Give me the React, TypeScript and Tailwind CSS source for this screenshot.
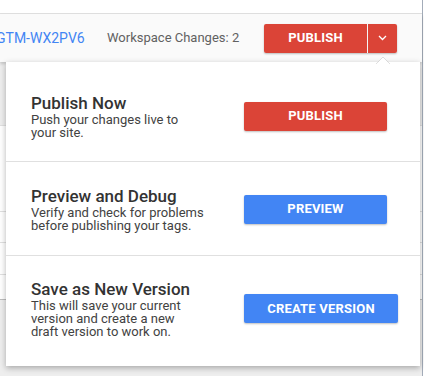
import React from 'react';

type Section = {
  title: string;
  lines: string[];
  action: string;
  color: 'red' | 'blue';
  width: string;
  pad: string;
};

const sections: Section[] = [
  {
    title: 'Publish Now',
    lines: ['Push your changes live to', 'your site.'],
    action: 'PUBLISH',
    color: 'red',
    width: 'w-[143px]',
    pad: 'pt-[31px] pb-[22px] border-b border-[#e0e0e0]',
  },
  {
    title: 'Preview and Debug',
    lines: ['Verify and check for problems', 'before publishing your tags.'],
    action: 'PREVIEW',
    color: 'blue',
    width: 'w-[143px]',
    pad: 'pt-[24px] pb-[23px] border-b border-[#e0e0e0]',
  },
  {
    title: 'Save as New Version',
    lines: ['This will save your current', 'version and create a new', 'draft version to work on.'],
    action: 'CREATE VERSION',
    color: 'blue',
    width: 'w-[154px]',
    pad: 'pt-[23px] pb-[28px]',
  },
];

const ActionButton: React.FC<{ label: string; color: 'red' | 'blue'; width: string }> = ({ label, color, width }) => (
  <button
    className={`${width} h-[29px] rounded-[2px] text-white text-[13px] font-bold tracking-[0.2px] shadow-[0_1px_2px_rgba(0,0,0,0.25)] ${
      color === 'red' ? 'bg-[#db4437]' : 'bg-[#4285f4]'
    }`}
  >
    {label}
  </button>
);

export default function App() {
  return (
    <div className="flex w-[424px] h-[376px] overflow-hidden bg-white font-['Roboto','Liberation_Sans',sans-serif]">
      <div className="relative flex flex-col w-[422px] h-full bg-[#eeeeee]">
        {/* top bar strip */}
        <div className="h-[14px] shrink-0 bg-white border-b border-[#e0e0e0]" />

        {/* workspace header */}
        <div className="relative z-10 flex items-center h-[48px] shrink-0 bg-[#fafafa] shadow-[0_2px_3px_rgba(0,0,0,0.18)]">
          <span className="ml-[-4px] w-[87px] shrink-0 whitespace-nowrap text-[14px] text-[#4285f4]">GTM-WX2PV6</span>
          <span className="ml-[24px] w-[133px] shrink-0 whitespace-nowrap text-[13px] text-[#616161]">Workspace Changes: 2</span>
          <div className="ml-[24px] flex h-[29px] rounded-[2px] shadow-[0_1px_2px_rgba(0,0,0,0.25)]">
            <button className="w-[103px] h-full rounded-l-[2px] bg-[#db4437] text-white text-[13px] font-bold tracking-[0.2px]">
              PUBLISH
            </button>
            <div className="w-px bg-[#f5f5f5]" />
            <button className="flex w-[29px] h-full items-center justify-center rounded-r-[2px] bg-[#db4437]">
              <svg width="9" height="6" viewBox="0 0 9 6">
                <polyline points="1,1 4.5,4.5 8,1" fill="none" stroke="white" strokeWidth="1.3" />
              </svg>
            </button>
          </div>
        </div>

        {/* underlying table rows */}
        <div className="h-[63px] shrink-0" />
        <div className="flex flex-col bg-white border-t border-[#e0e0e0]">
          <div className="h-[86px] border-b border-[#e0e0e0]" />
          <div className="h-[31px] border-b border-[#e0e0e0]" />
          <div className="h-[32px] border-b border-[#e0e0e0]" />
          <div className="h-[25px] border-b border-[#bdbdbd]" />
        </div>

        {/* publish dropdown */}
        <svg className="absolute left-[376px] top-[56px] z-30" width="14" height="8" viewBox="0 0 14 8">
          <polygon points="0,8 7,1 14,8" fill="white" />
          <polyline points="0,8 7,1 14,8" fill="none" stroke="rgba(0,0,0,0.12)" strokeWidth="1" />
        </svg>
        <div className="absolute left-[6px] top-[62px] z-20 w-[414px] h-[304px] bg-white shadow-[0_2px_6px_rgba(0,0,0,0.3)]">
          {sections.map((s) => (
            <div key={s.title} className={`flex items-center pl-[25px] ${s.pad}`}>
              <div className="w-[173px] shrink-0">
                <div className="h-[20px] leading-[20px] text-[17px] font-medium text-[#333333] whitespace-nowrap">{s.title}</div>
                {s.lines.map((l) => (
                  <div key={l} className="h-[13px] leading-[13px] text-[13px] text-[#424242] whitespace-nowrap">
                    {l}
                  </div>
                ))}
              </div>
              <div className="ml-[40px]">
                <ActionButton label={s.action} color={s.color} width={s.width} />
              </div>
            </div>
          ))}
        </div>
      </div>
      <div className="w-px h-full bg-[#a3acb9]" />
      <div className="w-px h-full bg-white" />
    </div>
  );
}
